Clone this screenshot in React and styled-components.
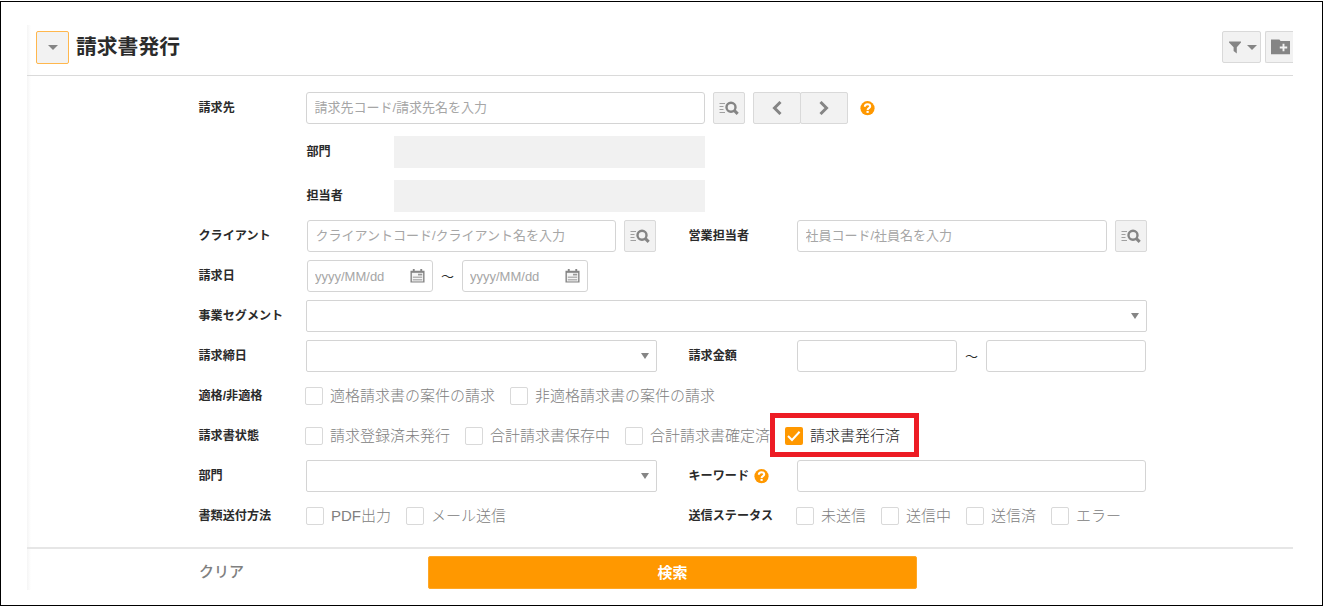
import React from "react";
import styled, { createGlobalStyle, css } from "styled-components";

const GlobalStyle = createGlobalStyle`
  * {
    box-sizing: border-box;
  }
  body {
    margin: 0;
    background: #fff;
    color: #2b2b2b;
    font-family: "Liberation Sans", "Noto Sans CJK JP", sans-serif;
  }
  input, button {
    font-family: inherit;
    margin: 0;
  }
`;

const SearchIcon = () => (
  <svg width="20" height="16" viewBox="0 0 20 16" fill="none">
    <path d="M0.5 3.5h5.5M0.5 6.5h4M0.5 9.5h4M0.5 12.5h5.5" stroke="#a0a0a0" strokeWidth="1" />
    <circle cx="12" cy="7.2" r="4.5" stroke="#858585" strokeWidth="2.4" />
    <path d="M15.2 10.4l3.5 3.5" stroke="#858585" strokeWidth="3" />
  </svg>
);

const CalendarIcon = () => (
  <svg width="16" height="16" viewBox="0 0 16 16">
    <path fill="#858585" d="M0.5 2.5H3V0.5h2v2h6v-2h2v2h2.5V15H0.5z" />
    <path fill="#f4f4f4" d="M2 4.6h12v9.2H2z" />
    <path fill="#b5b5b5" d="M3 8.6h10v1.6H3zM3 11.2h10v1.6H3z" />
    <path fill="#999" d="M8.5 5.6H13v1.8H8.5z" />
  </svg>
);

const FilterIcon = () => (
  <svg width="12" height="13" viewBox="0 0 12 13">
    <path fill="#858585" d="M0 0.5h12v1L7.8 6.2v6.3L4.6 10V6.2L0 1.5z" />
  </svg>
);

const FolderIcon = () => (
  <svg width="19" height="16" viewBox="0 0 19 16">
    <path fill="#858585" d="M0 0.5h8.4l1.2 1.4H19v13.3H0z" />
    <path d="M12.5 4.8v7.4M8.8 8.5h7.4" stroke="#f2f2f2" strokeWidth="1.9" />
  </svg>
);

const Chevron = ({ d }) => (
  <svg width="12" height="14" viewBox="0 0 12 14" fill="none">
    <path d={d} stroke="#858585" strokeWidth="3" />
  </svg>
);

const HelpIcon = () => (
  <svg width="15" height="15" viewBox="0 0 15 15" fill="none">
    <circle cx="7.5" cy="7.2" r="7.1" fill="#ff9800" />
    <path
      d="M4.8 5.7c0-1.6 1.1-2.5 2.7-2.5s2.7 1 2.7 2.2c0 1.7-2.6 1.7-2.6 3.6"
      stroke="#fff"
      strokeWidth="2"
    />
    <path fill="#fff" d="M6.5 9.9h2.2v2H6.5z" />
  </svg>
);

const statusItems = [
  { label: "請求登録済未発行" },
  { label: "合計請求書保存中" },
  { label: "合計請求書確定済" },
  { label: "請求書発行済", checked: true },
];

const CheckList = ({ items, offset }) => (
  <Checks $offset={offset}>
    {items.map(({ label, checked }) => (
      <CheckItem key={label} $checked={checked}>
        <CheckBox $checked={checked}>
          {checked && (
            <svg width="18" height="18" viewBox="0 0 18 18" fill="none">
              <path d="M3 9l4 4 7.6-8.2" stroke="#fff" strokeWidth="2" />
            </svg>
          )}
        </CheckBox>
        {label}
        {checked && <Marker />}
      </CheckItem>
    ))}
  </Checks>
);

const DateField = () => (
  <DateBox>
    <DateInput placeholder="yyyy/MM/dd" />
    <CalendarIcon />
  </DateBox>
);

const App = () => (
  <>
    <GlobalStyle />
    <Frame>
      <Panel>
        <Header>
          <MenuButton>
            <Caret />
          </MenuButton>
          <Title>請求書発行</Title>
          <FilterButton>
            <FilterIcon />
            <Caret />
          </FilterButton>
          <FolderButton>
            <FolderIcon />
          </FolderButton>
        </Header>
        <Form>
          <Row $space={12}>
            <Label>請求先</Label>
            <Input $width={399} placeholder="請求先コード/請求先名を入力" />
            <IconButton>
              <SearchIcon />
            </IconButton>
            <Pager>
              <PagerButton>
                <Chevron d="M9.5 1L3.5 7l6 6" />
              </PagerButton>
              <PagerButton>
                <Chevron d="M2.5 1l6 6-6 6" />
              </PagerButton>
            </Pager>
            <HelpIcon />
          </Row>
          <Row $space={12} $indent={108}>
            <Label $width={88}>部門</Label>
            <ReadOnly />
          </Row>
          <Row $indent={108}>
            <Label $width={88}>担当者</Label>
            <ReadOnly />
          </Row>
          <Row>
            <Half>
              <Label $width={109}>クライアント</Label>
              <Input $width={309} placeholder="クライアントコード/クライアント名を入力" />
              <IconButton>
                <SearchIcon />
              </IconButton>
            </Half>
            <Label $width={109}>営業担当者</Label>
            <Input $width={310} placeholder="社員コード/社員名を入力" />
            <IconButton>
              <SearchIcon />
            </IconButton>
          </Row>
          <Row>
            <Label $width={109}>請求日</Label>
            <DateField />
            <Tilde $width={29}>～</Tilde>
            <DateField />
          </Row>
          <Row>
            <Label>事業セグメント</Label>
            <Select $width={841}>
              <Caret $small />
            </Select>
          </Row>
          <Row>
            <Half>
              <Label>請求締日</Label>
              <Select $width={351}>
                <Caret $small />
              </Select>
            </Half>
            <Label $width={109}>請求金額</Label>
            <Input $width={160} />
            <Tilde $width={29}>～</Tilde>
            <Input $width={160} />
          </Row>
          <Row>
            <Label>適格/非適格</Label>
            <CheckList
              offset={-1}
              items={[{ label: "適格請求書の案件の請求" }, { label: "非適格請求書の案件の請求" }]}
            />
          </Row>
          <Row>
            <Label>請求書状態</Label>
            <CheckList offset={-1} items={statusItems} />
          </Row>
          <Row>
            <Half>
              <Label>部門</Label>
              <Select $width={351}>
                <Caret $small />
              </Select>
            </Half>
            <Label $width={109}>
              キーワード
              <HelpIcon />
            </Label>
            <Input $width={349} />
          </Row>
          <Row>
            <Half>
              <Label>書類送付方法</Label>
              <CheckList items={[{ label: "PDF出力" }, { label: "メール送信" }]} />
            </Half>
            <Label>送信ステータス</Label>
            <CheckList
              items={[
                { label: "未送信" },
                { label: "送信中" },
                { label: "送信済" },
                { label: "エラー" },
              ]}
            />
          </Row>
        </Form>
        <Footer>
          <ClearButton>クリア</ClearButton>
          <SubmitButton>検索</SubmitButton>
        </Footer>
      </Panel>
    </Frame>
  </>
);

const Frame = styled.div`
  width: 1323px;
  height: 605px;
  margin-top: 1px;
  border: 1px solid #000;
  padding: 23px 29px 15px 26px;
`;
const Panel = styled.div`
  display: flex;
  flex-direction: column;
  width: 1266px;
  height: 565px;
  overflow: hidden;
  background: linear-gradient(to right, #f5f5f5, #fff 4px);
`;
const Header = styled.div`
  display: flex;
  align-items: flex-start;
  flex: none;
  height: 51px;
  padding: 6px 0 0 9px;
  border-bottom: 1px solid #dadada;
`;
const buttonBase = css`
  display: flex;
  align-items: center;
  justify-content: center;
  flex: none;
  height: 32px;
  padding: 0;
  background: #f2f2f2;
  border: 1px solid #d9d9d9;
  border-radius: 2px;
`;
const MenuButton = styled.button`
  ${buttonBase}
  width: 33px;
  height: 33px;
  border-color: #ffb74d;
`;
const FilterButton = styled.button`
  ${buttonBase}
  gap: 6px;
  width: 39px;
  margin-right: 4px;
  padding-left: 3px;
`;
const FolderButton = styled.button`
  ${buttonBase}
  width: 28px;
  padding-left: 2px;
  border-right: none;
  border-radius: 2px 0 0 2px;
`;
const Title = styled.h1`
  flex: 1;
  margin: 0 0 0 7px;
  font-size: 20.8px;
  line-height: 32px;
  font-weight: 700;
`;
const Caret = styled.span`
  width: 0;
  height: 0;
  border: ${({ $small }) => ($small ? 4 : 5)}px solid transparent;
  border-top: ${({ $small }) => ($small ? 6 : 5)}px solid #858585;
  border-bottom: none;
`;
const Form = styled.div`
  padding: 16px 0 0 171px;
`;
const Row = styled.div`
  display: flex;
  align-items: center;
  height: 32px;
  margin-bottom: ${({ $space }) => $space || 8}px;
  margin-left: ${({ $indent }) => $indent || 0}px;
`;
const Half = styled.div`
  display: flex;
  align-items: center;
  width: 490px;
`;
const Label = styled.div`
  display: flex;
  align-items: center;
  gap: 5px;
  flex: none;
  width: ${({ $width }) => $width || 108}px;
  padding-left: 0.5px;
  font-size: 12.1px;
  line-height: 18px;
  font-weight: 700;
  white-space: nowrap;
`;
const Input = styled.input`
  flex: none;
  width: ${({ $width }) => $width}px;
  height: 32px;
  padding: 0 8px 1px 7.5px;
  border: 1px solid #d4d4d4;
  border-radius: 3px;
  background: #fff;
  font-size: 13px;
  outline: none;

  &::placeholder {
    color: #a6a6a6;
    opacity: 1;
  }
`;
const IconButton = styled.button`
  ${buttonBase}
  width: 32px;
  margin-left: 8px;
`;
const Pager = styled.div`
  display: flex;
  margin: 0 12px 0 8px;
`;
const PagerButton = styled.button`
  ${buttonBase}
  width: 48px;

  & + & {
    margin-left: -1px;
  }
`;
const ReadOnly = styled.div`
  width: 311px;
  height: 32px;
  background: #f1f1f1;
`;
const DateBox = styled.div`
  display: flex;
  align-items: center;
  width: 126px;
  height: 32px;
  padding: 0 7px;
  border: 1px solid #d4d4d4;
  border-radius: 3px;
`;
const DateInput = styled(Input)`
  width: 95px;
  height: 28px;
  padding: 0;
  border: none;
`;
const Tilde = styled.span`
  width: ${({ $width }) => $width}px;
  padding-bottom: 2px;
  font-size: 13px;
  text-align: center;
`;
const Select = styled.div`
  display: flex;
  align-items: center;
  justify-content: flex-end;
  width: ${({ $width }) => $width}px;
  height: 32px;
  padding-right: 7px;
  border: 1px solid #d4d4d4;
  border-radius: 2px;
  background: #fff;
`;
const Checks = styled.div`
  display: flex;
  gap: 15px;
  margin-left: ${({ $offset }) => $offset || 0}px;
`;
const CheckItem = styled.div`
  position: relative;
  display: flex;
  align-items: center;
  gap: 7px;
  font-size: 15px;
  font-weight: 300;
  line-height: 20px;
  white-space: nowrap;
  color: ${({ $checked }) => ($checked ? "#222" : "#808080")};
`;
const CheckBox = styled.span`
  display: flex;
  width: 18px;
  height: 18px;
  border: ${({ $checked }) => ($checked ? "none" : "1px solid #d9d9d9")};
  border-radius: 2px;
  background: ${({ $checked }) => ($checked ? "#ff9800" : "#fff")};
`;
const Marker = styled.span`
  position: absolute;
  top: -13px;
  left: -15px;
  width: 149px;
  height: 44px;
  border: 5px solid #ed1c24;
`;
const Footer = styled.div`
  display: flex;
  align-items: flex-start;
  flex: 1;
  margin-top: 7px;
  padding: 7px 0 0 172px;
  border-top: 2px solid #e6e6e6;
`;
const ClearButton = styled.button`
  width: 229px;
  height: 32px;
  padding: 0 0 4px;
  border: none;
  background: none;
  color: #808080;
  font-size: 15px;
  font-weight: 500;
  text-align: left;
`;
const SubmitButton = styled.button`
  ${buttonBase}
  width: 489px;
  height: 33px;
  padding-bottom: 3px;
  border-color: #ffa726;
  background: #ff9800;
  color: #fff;
  font-size: 15px;
  font-weight: 700;
`;

export default App;
